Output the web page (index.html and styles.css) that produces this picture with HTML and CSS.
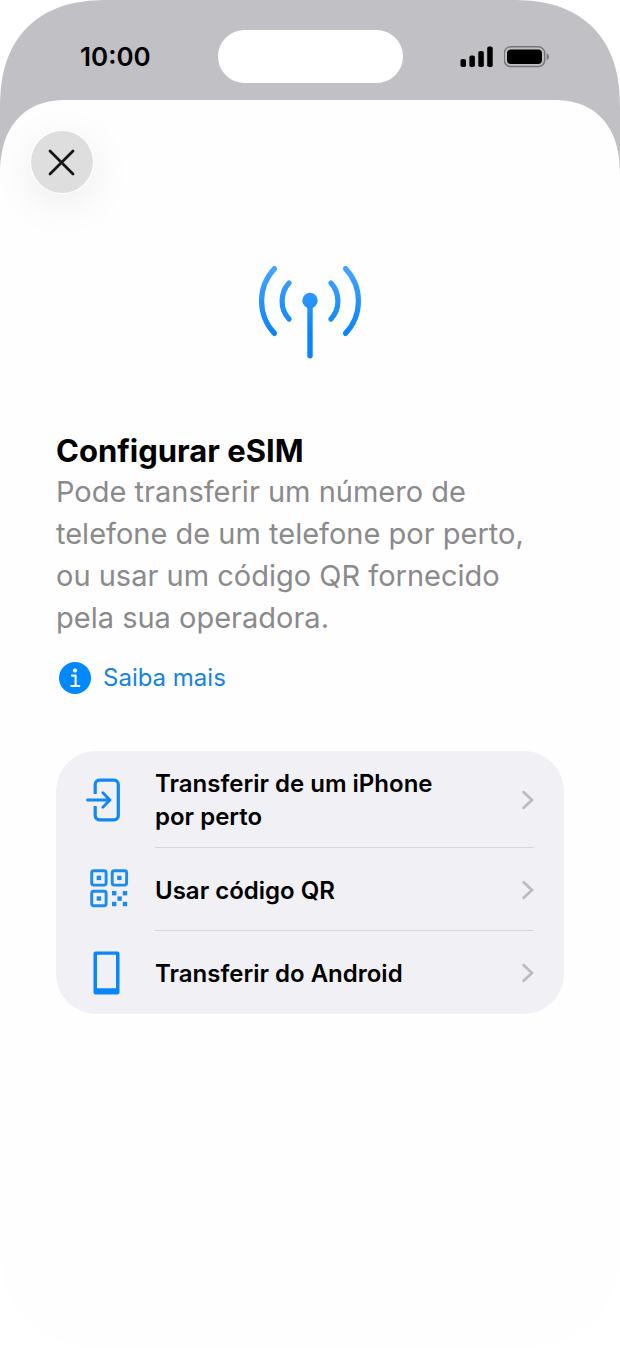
FILE: index.html
```html
<!doctype html>
<html lang="pt">

<head>
	<meta charset="utf-8">
	<meta name="viewport" content="width=device-width, initial-scale=1">
	<title>Configurar eSIM</title>
	<link rel="stylesheet" href="styles.css">
</head>

<body>
	<div class="phone">
		<header class="status">
			<span class="time">10:00</span>
			<div class="island"></div>
			<div class="status-icons">
				<svg class="signal" width="34" height="22" viewBox="0 0 34 22">
					<rect x="0.5" y="13" width="5.5" height="8" rx="1.8"/>
					<rect x="9.4" y="9.5" width="5.5" height="11.5" rx="1.8"/>
					<rect x="18.3" y="4.9" width="5.5" height="16.1" rx="1.8"/>
					<rect x="27.2" y="0.5" width="5.5" height="20.5" rx="1.8"/>
				</svg>
				<svg class="battery" width="46" height="22" viewBox="0 0 46 22">
					<rect x="0.3" y="0.8" width="40.4" height="19.8" rx="6.4" fill="none" stroke="#77767b" stroke-width="1.5"/>
					<rect x="3" y="3.5" width="35" height="14.4" rx="4"/>
					<path d="M42.7 7.4c3 1.2 3 5.4 0 6.6z" fill="#77767b"/>
				</svg>
			</div>
		</header>

		<main class="sheet">
			<button class="close" type="button" aria-label="Fechar">
				<svg width="28" height="28" viewBox="0 0 28 28">
					<path d="M2 3l23 23M25 3l-23 23"/>
				</svg>
			</button>

			<svg class="antenna" width="106" height="96" viewBox="0 0 106 96">
				<defs>
					<linearGradient id="blue" gradientUnits="userSpaceOnUse" x1="0" y1="0" x2="0" y2="70">
						<stop offset="0" stop-color="#47a5ff"/>
						<stop offset="1" stop-color="#0a84f8"/>
					</linearGradient>
				</defs>
				<g fill="none" stroke="url(#blue)" stroke-width="5.2" stroke-linecap="round">
					<path d="M17.5 4.6C0.3 22.8 0.3 51.2 17.5 69.4"/>
					<path d="M32 19C22.8 29 22.8 45 32 55"/>
					<path d="M74 19C83.2 29 83.2 45 74 55"/>
					<path d="M88.5 4.6C105.7 22.8 105.7 51.2 88.5 69.4"/>
				</g>
				<circle cx="53" cy="36.5" r="7.7" fill="url(#blue)"/>
				<rect x="50.3" y="37" width="5.4" height="57.5" rx="2.7" fill="url(#blue)"/>
			</svg>

			<section class="content">
				<h1>Configurar eSIM</h1>
				<p class="intro">Pode transferir um número de telefone de um telefone por perto, ou usar um código QR fornecido pela sua operadora.</p>
				<a class="more" href="#">
					<svg width="32" height="32" viewBox="0 0 32 32">
						<circle cx="16" cy="16" r="16" fill="#0088ff"/>
						<circle cx="16" cy="8.6" r="2.1" fill="#fff"/>
						<path d="M13 13.600h3.600V24M12.300 24h8" fill="none" stroke="#fff" stroke-width="2.100" stroke-linecap="round" stroke-linejoin="round"/>
					</svg>
					Saiba mais
				</a>

				<ul class="options">
					<li>
						<a href="#">
							<svg class="icon" width="56" height="56" viewBox="0 0 56 56">
								<g fill="none" stroke="#0f87f5" stroke-width="3.2">
									<path d="M14.2 22V12.500a4.300 4.300 0 0 1 4.300-4.300H33a4.300 4.300 0 0 1 4.300 4.300V43.500a4.300 4.300 0 0 1-4.300 4.300H18.500a4.300 4.300 0 0 1-4.300-4.300V34"/>
									<path d="M6.500 28H28.500M21.800 20.800L29 28l-7.200 7.200" stroke-width="2.8" stroke-linecap="round" stroke-linejoin="round"/>
								</g>
							</svg>
							<span class="label">Transferir de um iPhone por perto</span>
							<svg class="chevron" width="12" height="20" viewBox="0 0 12 20"><path d="M1.700 2.200L10 10l-8.300 7.800"/></svg>
						</a>
					</li>
					<li>
						<a href="#">
							<svg class="icon" width="56" height="56" viewBox="0 0 56 56">
								<g fill="none" stroke="#1a8cf0" stroke-width="2.9">
									<rect x="10.7" y="8.7" width="14.400" height="14.400" rx="2"/>
									<rect x="31.2" y="8.7" width="14.400" height="14.400" rx="2"/>
									<rect x="10.7" y="29.3" width="14.400" height="14.400" rx="2"/>
								</g>
								<g fill="#1a8cf0">
									<rect x="15.7" y="13.7" width="4.4" height="4.4"/>
									<rect x="36.2" y="13.7" width="4.4" height="4.4"/>
									<rect x="15.7" y="34.3" width="4.4" height="4.4"/>
									<rect x="31" y="29" width="4.4" height="4.4"/>
									<rect x="41.8" y="29" width="4.4" height="4.4"/>
									<rect x="36.4" y="34.4" width="4.4" height="4.4"/>
									<rect x="31" y="39.8" width="4.4" height="4.4"/>
									<rect x="41.8" y="39.8" width="4.4" height="4.4"/>
								</g>
							</svg>
							<span class="label">Usar código QR</span>
							<svg class="chevron" width="12" height="20" viewBox="0 0 12 20"><path d="M1.700 2.200L10 10l-8.300 7.800"/></svg>
						</a>
					</li>
					<li>
						<a href="#">
							<svg class="icon" width="56" height="56" viewBox="0 0 56 56">
								<path fill="#0a86fa" fill-rule="evenodd" d="M14.500 6.500h22a2 2 0 0 1 2 2v39a2 2 0 0 1-2 2h-22a2 2 0 0 1-2-2V8.500a2 2 0 0 1 2-2zM16 9.800v33.500h19V9.800z"/>
							</svg>
							<span class="label">Transferir do Android</span>
							<svg class="chevron" width="12" height="20" viewBox="0 0 12 20"><path d="M1.700 2.200L10 10l-8.300 7.800"/></svg>
						</a>
					</li>
				</ul>
			</section>
		</main>
	</div>
</body>

</html>
```
FILE: styles.css
```css
* {
	margin: 0;
	padding: 0;
	box-sizing: border-box;
}

body {
	background: #fff;
	font-family: Inter, "Liberation Sans", sans-serif;
	color: #000;
}

ul {
	list-style: none;
}

a {
	color: inherit;
	text-decoration: none;
}

svg {
	display: block;
	flex: none;
}

/* grey only behind the top corners of the sheet */
.phone {
	min-height: 100vh;
	display: flex;
	flex-direction: column;
	background: linear-gradient(#c1c0c5 240px, #fefefe 240px);
	border-radius: 108px;
	corner-shape: superellipse(1.25);
	overflow: hidden;
}

/* status bar */
.status {
	display: grid;
	grid-template-columns: 1fr auto 1fr;
	align-items: center;
	padding: 30px 70px 17px;
}

.time {
	padding-left: 10px;
	font-size: 26px;
	line-height: 32px;
	font-weight: 600;
}

.island {
	width: 185px;
	height: 53px;
	border-radius: 27px;
	background: #fff;
}

.status-icons {
	display: flex;
	justify-content: flex-end;
	gap: 10px;
}

/* sheet */
.sheet {
	flex: 1;
	padding: 31px 0 40px;
	background: #fefefe;
	border-radius: 68px 68px 0 0 / 76px 76px 0 0;
	corner-shape: superellipse(1.25);
}

.close {
	display: flex;
	align-items: center;
	justify-content: center;
	width: 62px;
	height: 62px;
	margin-left: 31px;
	border: 0;
	border-radius: 50%;
	background: #dedede;
	box-shadow: 0 0 0 1px #fff, 0 10px 44px rgba(0, 0, 0, 0.08);
}

.close path {
	fill: none;
	stroke: #161616;
	stroke-width: 2.8;
	stroke-linecap: round;
}

.antenna {
	margin: 71px auto 0;
}

.content {
	padding: 0 56px;
	margin-top: 71px;
}

h1 {
	font-size: 31px;
	line-height: 40px;
	font-weight: 700;
}

.intro {
	font-size: 29px;
	line-height: 42px;
	color: #8a8a8c;
}

.more {
	display: flex;
	align-items: center;
	gap: 12px;
	width: fit-content;
	margin: 23px 0 0 3px;
	font-size: 24px;
	line-height: 32px;
	color: #1583e4;
}

.options {
	margin-top: 57px;
	background: #f1f0f5;
	border-radius: 40px;
}

.options a {
	display: grid;
	grid-template-columns: 56px 1fr 12px;
	column-gap: 18px;
	align-items: center;
	min-height: 83px;
	padding: 16px 30px 15px 25px;
	position: relative;
}

/* line under the label and chevron only */
.options li:not(:last-child) a::after {
	content: "";
	position: absolute;
	left: 99px;
	right: 30px;
	bottom: 0;
	height: 1px;
	background: #d6d5da;
}

.icon {
	margin: -8px 0;
}

.label {
	max-width: 300px;
	font-size: 24px;
	line-height: 33px;
	font-weight: 600;
}

.chevron path {
	fill: none;
	stroke: #bcbbc0;
	stroke-width: 2.8;
	stroke-linecap: round;
	stroke-linejoin: round;
}
```
